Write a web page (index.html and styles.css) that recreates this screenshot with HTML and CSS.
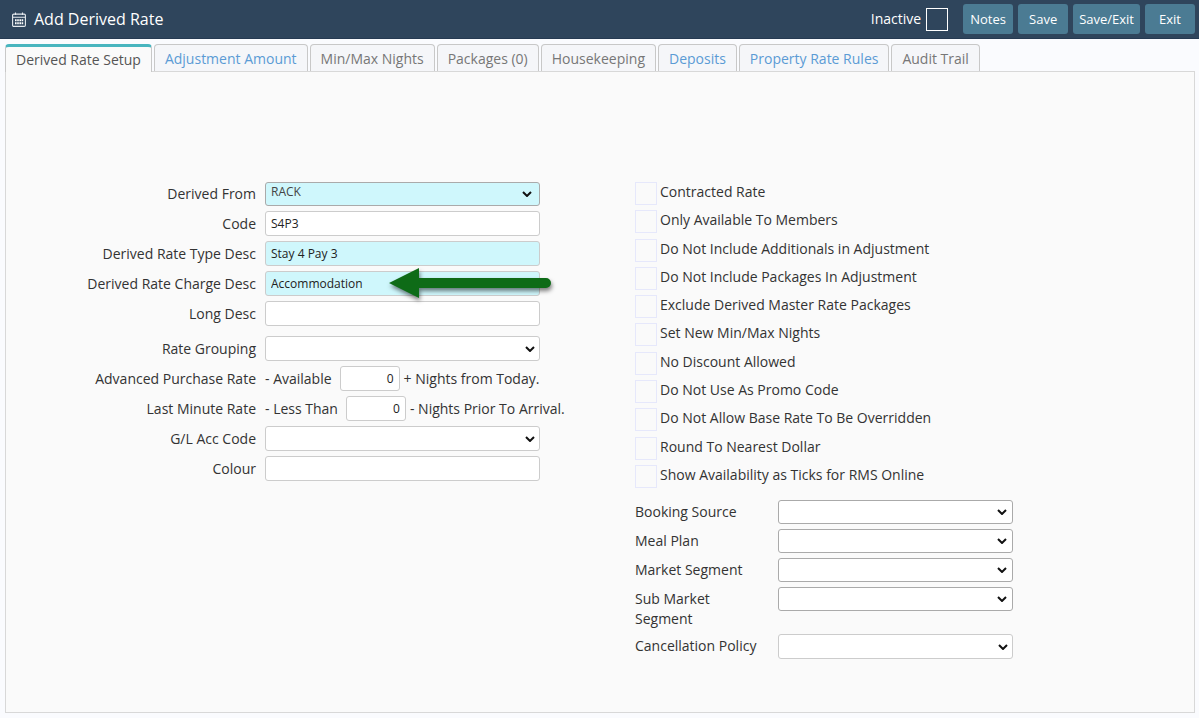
FILE: index.html
```
<!DOCTYPE html>
<html lang="en">

<head>
  <meta charset="UTF-8">
  <meta name="viewport" content="width=device-width, initial-scale=1.0">
  <title>Add Derived Rate</title>
  <link rel="stylesheet" href="styles.css">
</head>

<body>
  <header class="topbar">
    <svg class="calendar" viewBox="0 0 14 15" width="14" height="15" aria-hidden="true">
      <rect x="0.6" y="2.1" width="12.8" height="12.3" rx="1.2" fill="none" stroke="#e6eaee" stroke-width="1.1" />
      <path d="M1 5.2h12M3.5 0.5v2.5M10.5 0.5v2.5" stroke="#e6eaee" stroke-width="1.1" />
      <path d="M3 8.2h1.6M5.2 8.2h1.6M7.4 8.2h1.6M9.6 8.2h1.6M3 11.2h1.6M5.2 11.2h1.6M7.4 11.2h1.6M9.6 11.2h1.6" stroke="#fff" stroke-width="2" />
    </svg>
    <h1>Add Derived Rate</h1>
    <label class="inactive" for="inactive">Inactive</label>
    <input type="checkbox" id="inactive" class="box box-light">
    <div class="actions">
      <button type="button">Notes</button>
      <button type="button">Save</button>
      <button type="button">Save/Exit</button>
      <button type="button">Exit</button>
    </div>
  </header>

  <main>
    <nav class="tabs">
      <a href="#setup" class="tab active">Derived Rate Setup</a>
      <a href="#adjustment" class="tab filled">Adjustment Amount</a>
      <a href="#nights" class="tab">Min/Max Nights</a>
      <a href="#packages" class="tab">Packages (0)</a>
      <a href="#housekeeping" class="tab">Housekeeping</a>
      <a href="#deposits" class="tab filled">Deposits</a>
      <a href="#rules" class="tab filled">Property Rate Rules</a>
      <a href="#audit" class="tab">Audit Trail</a>
    </nav>

    <form class="panel" id="setup">
      <div class="details">
        <div class="row">
          <label for="derivedFrom">Derived From</label>
          <select id="derivedFrom" class="field short required">
            <option>RACK</option>
          </select>
        </div>
        <div class="row">
          <label for="code">Code</label>
          <input type="text" id="code" class="field" value="S4P3">
        </div>
        <div class="row">
          <label for="typeDesc">Derived Rate Type Desc</label>
          <input type="text" id="typeDesc" class="field required" value="Stay 4 Pay 3">
        </div>
        <div class="row">
          <label for="chargeDesc">Derived Rate Charge Desc</label>
          <div class="pointed">
            <input type="text" id="chargeDesc" class="field required" value="Accommodation">
            <svg class="arrow" viewBox="0 0 170 40" width="170" height="40" aria-hidden="true">
              <path d="M4 18L34 3v10h127a5 5 0 0 1 0 10H34v10z" fill="#0e6b17" />
            </svg>
          </div>
        </div>
        <div class="row">
          <label for="longDesc">Long Desc</label>
          <input type="text" id="longDesc" class="field">
        </div>
        <div class="row section">
          <label for="grouping">Rate Grouping</label>
          <select id="grouping" class="field"></select>
        </div>
        <div class="row">
          <label for="advanced">Advanced Purchase Rate</label>
          <div class="nights">
            <span class="before">- Available</span>
            <input type="text" id="advanced" class="field number" value="0">
            <span>+ Nights from Today.</span>
          </div>
        </div>
        <div class="row">
          <label for="lastMinute">Last Minute Rate</label>
          <div class="nights">
            <span class="before">- Less Than</span>
            <input type="text" id="lastMinute" class="field number" value="0">
            <span>- Nights Prior To Arrival.</span>
          </div>
        </div>
        <div class="row">
          <label for="glCode">G/L Acc Code</label>
          <select id="glCode" class="field"></select>
        </div>
        <div class="row">
          <label for="colour">Colour</label>
          <input type="text" id="colour" class="field">
        </div>
      </div>

      <div class="settings">
        <div class="options">
          <label><input type="checkbox" class="box">Contracted Rate</label>
          <label><input type="checkbox" class="box">Only Available To Members</label>
          <label><input type="checkbox" class="box">Do Not Include Additionals in Adjustment</label>
          <label><input type="checkbox" class="box">Do Not Include Packages In Adjustment</label>
          <label><input type="checkbox" class="box">Exclude Derived Master Rate Packages</label>
          <label><input type="checkbox" class="box">Set New Min/Max Nights</label>
          <label><input type="checkbox" class="box">No Discount Allowed</label>
          <label><input type="checkbox" class="box">Do Not Use As Promo Code</label>
          <label><input type="checkbox" class="box">Do Not Allow Base Rate To Be Overridden</label>
          <label><input type="checkbox" class="box">Round To Nearest Dollar</label>
          <label><input type="checkbox" class="box">Show Availability as Ticks for RMS Online</label>
        </div>

        <div class="lookups">
          <label for="source">Booking Source</label>
          <select id="source" class="field short"></select>
          <label for="meal">Meal Plan</label>
          <select id="meal" class="field short"></select>
          <label for="segment">Market Segment</label>
          <select id="segment" class="field short"></select>
          <label for="subSegment">Sub Market Segment</label>
          <select id="subSegment" class="field short"></select>
          <label for="policy">Cancellation Policy</label>
          <select id="policy" class="field"></select>
        </div>
      </div>
    </form>
  </main>
</body>

</html>
```

FILE: styles.css
```
* {
  box-sizing: border-box;
}

body {
  margin: 0;
  min-height: 100vh;
  display: flex;
  flex-direction: column;
  font-family: "Open Sans", sans-serif;
  font-size: 14px;
  line-height: 20px;
  color: #333;
  background-color: #fafbfe;
}

.topbar {
  display: flex;
  align-items: center;
  padding: 4px 4px 4px 12px;
  color: #fff;
  background-color: #2f455c;
  border-bottom: 1px solid #263a52;
}

.topbar h1 {
  margin: 0 auto 0 8px;
  font-size: 16px;
  font-weight: 500;
}

.inactive {
  margin-right: 5px;
  font-weight: 500;
}

.actions {
  display: flex;
  gap: 5px;
  margin-left: 15px;
}

.actions button {
  min-width: 50px;
  height: 30px;
  padding: 0 6px;
  font: 500 13px "Open Sans", sans-serif;
  color: #fff;
  background-color: #4b7b93;
  border: none;
  border-radius: 3px;
  cursor: pointer;
}

.box {
  appearance: none;
  flex: none;
  width: 22px;
  height: 23px;
  margin: 0;
  border: 1px solid #e6e8fb;
}

.box:checked {
  background-color: #48b5bf;
}

.box-light {
  border-color: #fff;
}

main {
  flex: 1;
  display: flex;
  flex-direction: column;
  padding: 5px 4px 5px 5px;
}

.tabs {
  display: flex;
  gap: 2px;
}

.tab {
  height: 28px;
  margin-bottom: -1px;
  padding: 4px 10px;
  color: #777;
  text-decoration: none;
  background-color: #f5f6f9;
  border: 1px solid #c8c8c8;
  border-bottom-color: #d8d8d8;
  border-radius: 4px 4px 0 0;
}

.tab.filled {
  color: #5b9bd5;
}

.tab.active {
  padding-top: 3px;
  color: #555;
  background-color: #fafafa;
  border-top: 3px solid #48b5bf;
  border-bottom: none;
  z-index: 1;
}

.panel {
  flex: 1;
  display: flex;
  align-items: flex-start;
  gap: 95px;
  padding: 110px 20px 20px 76px;
  background-color: #fafafa;
  border: 1px solid #d8d8d8;
}

.details {
  display: flex;
  flex-direction: column;
  gap: 5px;
}

.row {
  display: grid;
  grid-template-columns: 174px 275px;
  column-gap: 9px;
  align-items: center;
}

.row > label {
  text-align: right;
}

.section {
  margin-top: 5px;
}

.field {
  display: block;
  width: 100%;
  height: 25px;
  padding: 0 5px;
  font: 12px "Open Sans", sans-serif;
  color: #222;
  background-color: #fff;
  border: 1px solid #ccc;
  border-radius: 3px;
}

select.field {
  appearance: none;
  background-image: url("data:image/svg+xml,%3Csvg xmlns='http://www.w3.org/2000/svg' width='10' height='6'%3E%3Cpath d='M1 1l4 4 4-4' fill='none' stroke='%23111' stroke-width='2'/%3E%3C/svg%3E");
  background-repeat: no-repeat;
  background-position: right 4px center;
}

select.short {
  height: 24px;
  padding-bottom: 5px;
  color: #444;
  border-color: #aaa;
  background-position: right 5px center;
}

.required,
select.required {
  background-color: #cff7fc;
}

select.required {
  background-position: right 7px center;
}

.pointed {
  position: relative;
}

/* callout over the charge description */
.arrow {
  position: absolute;
  top: -6px;
  left: 120px;
  filter: drop-shadow(1px 3px 2px rgba(0, 0, 0, 0.5));
}

.nights {
  display: flex;
  align-items: center;
  gap: 4px;
  white-space: nowrap;
}

.before {
  margin-right: 4px;
}

.number {
  flex: none;
  width: 60px;
  text-align: right;
}

/* the rows share the height left over evenly */
.options {
  display: flex;
  flex-direction: column;
  justify-content: space-between;
  min-height: 306px;
}

.options label {
  display: flex;
  align-items: flex-start;
  gap: 3px;
}

.lookups {
  display: grid;
  grid-template-columns: 125px 235px;
  column-gap: 18px;
  row-gap: 5px;
  align-items: start;
  margin-top: 12px;
}

.lookups label {
  padding-top: 2px;
}
```
